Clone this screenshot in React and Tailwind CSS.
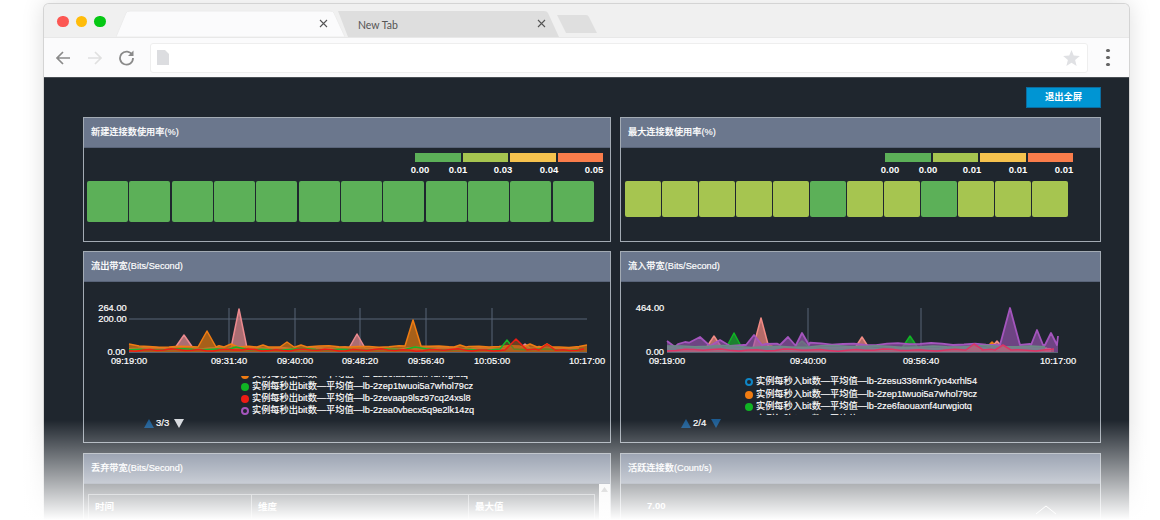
const FONT = "font-['Liberation_Sans','Noto_Sans_CJK_SC',sans-serif]";

function wiggle(x0, x1, step, base, amp, seed) {
  const pts = [];
  let i = 0;
  for (let x = x0; x <= x1 + 0.01; x += step) {
    const v = Math.sin(i * 1.7 + seed) * 0.6 + Math.sin(i * 0.63 + seed * 2.3) * 0.4;
    pts.push([x, base + v * amp]);
    i++;
  }
  return pts;
}

function withPeaks(pts, peaks) {
  const kept = pts.filter(([x]) => !peaks.some(([px, , w]) => Math.abs(x - px) < w));
  const extra = [];
  peaks.forEach(([px, py, w, fy]) => {
    extra.push([px, py]);
    if (fy) {
      extra.push([px - w, fy]);
      extra.push([px + w, fy]);
    }
  });
  return [...kept, ...extra].sort((a, b) => a[0] - b[0]);
}

function Area({ pts, bottom, stroke, fill, fo = 0.55, sw = 1.5 }) {
  const line = pts.map((p) => p[0].toFixed(1) + "," + p[1].toFixed(1)).join(" ");
  const first = pts[0][0];
  const last = pts[pts.length - 1][0];
  return (
    <g>
      <polygon points={`${first},${bottom} ${line} ${last},${bottom}`} fill={fill} fillOpacity={fo} />
      <polyline points={line} fill="none" stroke={stroke} strokeWidth={sw} strokeLinejoin="round" />
    </g>
  );
}

function AxisText({ x, y, children }) {
  return (
    <text x={x} y={y} textAnchor="middle" fill="#fff" stroke="#fff" strokeWidth="0.2" fontSize="9.3">
      {children}
    </text>
  );
}

function LeftChart() {
  const b = 352;
  const L = 129, R = 587;
  const pink = withPeaks(wiggle(L, R, 9, 348, 1, 1), [
    [184, 335, 9, 348],
    [239, 309, 8, 348],
    [357, 334, 8, 348],
    [525, 344, 5, 348],
  ]);
  const orange = withPeaks(wiggle(L, R, 10, 346.5, 0.9, 2.4), [
    [207, 331, 9, 347],
    [231, 344, 7, 347],
    [263, 345, 6, 347],
    [287, 342, 7, 347],
    [301, 345, 6, 347],
    [413, 320, 8, 346],
    [460, 345, 6, 347],
    [530, 344, 7, 347],
    [547, 344, 5, 347],
    [129, 344, 3],
    [587, 345, 3],
  ]);
  const green = withPeaks(wiggle(L, R, 11, 349.5, 1, 3.2), [
    [507, 340, 7, 349],
    [236, 347, 5],
    [415, 347, 5],
  ]);
  const red = withPeaks(wiggle(L, R, 7, 350, 1.3, 0.4), [
    [516, 339, 11, 350],
    [547, 344, 8, 350],
  ]);
  return (
    <svg className="block w-[526px] h-[94px]" viewBox="84 282 526 94">
      <line x1="129" x2="587" y1="319" y2="319" stroke="#596476" strokeWidth="1" />
      {[229, 295, 360, 426, 492].map((x) => (
        <line key={x} x1={x} x2={x} y1="308" y2="352" stroke="#596476" strokeWidth="1" />
      ))}
      <Area pts={pink} bottom={b} stroke="#ec8a8f" fill="#e88c90" fo={0.7} />
      <Area pts={orange} bottom={b} stroke="#f07c12" fill="#c96f14" fo={0.8} />
      <Area pts={green} bottom={b} stroke="#18b52a" fill="#b06a18" fo={0.4} />
      <Area pts={red} bottom={b} stroke="#ee1c14" fill="#a8571c" fo={0.55} />
      <line x1="129" x2="587" y1="352.5" y2="352.5" stroke="#596476" strokeWidth="1" />
      <AxisText x={112.5} y={311}>264.00</AxisText>
      <AxisText x={112.5} y={322}>200.00</AxisText>
      <AxisText x={116.5} y={355}>0.00</AxisText>
      {[["09:19:00", 129], ["09:31:40", 229], ["09:40:00", 295], ["09:48:20", 360], ["09:56:40", 426], ["10:05:00", 492], ["10:17:00", 587]].map(([t, x]) => (
        <AxisText key={t} x={x} y={364}>{t}</AxisText>
      ))}
    </svg>
  );
}

function RightChart() {
  const b = 352;
  const L = 667, R = 1058;
  const green = withPeaks(wiggle(L, R, 20, 348, 0.8, 2), [
    [734, 333, 8, 348],
    [910, 336, 8, 348],
    [802, 341, 8, 348],
  ]);
  const orange = withPeaks(wiggle(L, R, 20, 348, 0.8, 3), [
    [992, 342, 6, 348],
    [770, 345, 5, 348],
  ]);
  const pink = withPeaks(wiggle(L, R, 16, 348, 0.8, 5), [
    [714, 336, 8, 348],
    [761, 318, 8, 348],
    [862, 337, 7, 348],
    [997, 341, 6, 348],
  ]);
  const purple = withPeaks(wiggle(L, R, 11, 344, 1.4, 1.2), [
    [667, 341, 1],
    [675, 347, 3],
    [685, 342, 4],
    [700, 337, 6],
    [710, 346, 4],
    [720, 340, 4],
    [730, 346, 4],
    [754, 335, 8, 345],
    [788, 337, 8, 345],
    [802, 333, 7, 345],
    [1010, 308, 10, 345],
    [1037, 330, 6, 345],
    [1051, 333, 6, 345],
    [1058, 336, 1],
  ]);
  const grey = wiggle(L, R, 14, 346.5, 1.2, 4);
  const rose = withPeaks(wiggle(L, R, 9, 350, 1.2, 0.9), [
    [974, 344, 8, 350],
    [1003, 345, 8, 350],
  ]);
  return (
    <svg className="block w-[479px] h-[94px]" viewBox="621 282 479 94">
      {[808, 921].map((x) => (
        <line key={x} x1={x} x2={x} y1="308" y2="352" stroke="#596476" strokeWidth="1" />
      ))}
      <Area pts={orange} bottom={b} stroke="#f07c12" fill="#e07a20" fo={0.7} />
      <Area pts={green} bottom={b} stroke="#10b424" fill="#1a9a30" fo={0.8} />
      <Area pts={pink} bottom={b} stroke="#f08a84" fill="#e8827c" fo={0.75} />
      <Area pts={purple} bottom={b} stroke="#a455bd" fill="#9a55b0" fo={0.65} sw={1.8} />
      <Area pts={grey} bottom={b} stroke="#6d8a86" fill="#66858a" fo={0.75} />
      <Area pts={rose} bottom={b} stroke="#dc3567" fill="#c45a78" fo={0.65} />
      <line x1="667" x2="1058" y1="352.5" y2="352.5" stroke="#596476" strokeWidth="1" />
      <AxisText x={650} y={311}>464.00</AxisText>
      <AxisText x={655} y={355}>0.00</AxisText>
      {[["09:19:00", 667], ["09:40:00", 808], ["09:56:40", 921], ["10:17:00", 1058]].map(([t, x]) => (
        <AxisText key={t} x={x} y={364}>{t}</AxisText>
      ))}
    </svg>
  );
}

function Panel({ title, className = "", children }) {
  return (
    <section className={"border border-[#a3abb4] bg-[#1f262e] overflow-hidden " + className}>
      <h2 className="h-[30px] bg-[#6b778d] border-b border-[#596479] pl-[7px] pt-[1px] flex items-center text-[9.2px] font-medium [-webkit-text-stroke:0.15px_white] text-white">
        {title}
      </h2>
      {children}
    </section>
  );
}

function Heat({ bars, labels, cells, gap, cellClass, left, labelXs, barRight }) {
  return (
    <div>
      <div className="flex justify-end gap-[2px] pt-[5px]" style={{ paddingRight: barRight }}>
        {bars.map((c, i) => (
          <div key={i} className="h-[9px] w-[45.5px]" style={{ background: c }} />
        ))}
      </div>
      <div className="relative h-[19px]">
        {labels.map((t, i) => (
          <span key={i} className="absolute top-[1px] text-[9.5px] font-bold text-white -translate-x-1/2" style={{ left: labelXs[i] }}>
            {t}
          </span>
        ))}
      </div>
      <div className="flex" style={{ gap, paddingLeft: left }}>
        {cells.map((c, i) => (
          <div key={i} className={"rounded-[2px] " + cellClass} style={{ background: c }} />
        ))}
      </div>
    </div>
  );
}

function Dot({ color, hollow }) {
  return (
    <span
      className="inline-block w-[8px] h-[8px] rounded-full shrink-0"
      style={hollow ? { border: `2px solid ${color}` } : { background: color }}
    />
  );
}

function Legend({ rows, left, step, top }) {
  return (
    <div className="h-[39px] overflow-hidden text-[9.2px] [-webkit-text-stroke:0.15px_white] text-white" style={{ paddingLeft: left }}>
      <div style={{ marginTop: top }}>
        {rows.map(([c, h, t]) => (
          <div key={t} className="flex items-center gap-[3px]" style={{ height: step }}>
            <Dot color={c} hollow={h} />
            <span className="whitespace-nowrap">{t}</span>
          </div>
        ))}
      </div>
    </div>
  );
}

function Tri({ down, color }) {
  return (
    <svg width="10" height="9" viewBox="0 0 10 9" className="block">
      <polygon points={down ? "0,0 10,0 5,9" : "0,9 10,9 5,0"} fill={color} />
    </svg>
  );
}

function Pager({ left, text, downColor }) {
  return (
    <div className="flex items-center h-[14px] mt-[1px] text-[9.5px] [-webkit-text-stroke:0.2px_white] text-white" style={{ paddingLeft: left }}>
      <Tri color="#1d5c92" />
      <span className="ml-[2px] mr-[5px]">{text}</span>
      <Tri down color={downColor} />
    </div>
  );
}

function TabX({ className }) {
  return (
    <svg width="9" height="9" viewBox="0 0 9 9" className={className}>
      <path d="M1 1 L8 8 M8 1 L1 8" stroke="#555" strokeWidth="1.1" />
    </svg>
  );
}

const G = "#5cb058";
const Y = "#a6c550";
const BARS = ["#5cb058", "#a6c550", "#f6c24e", "#fa7d4b"];

export default function App() {
  return (
    <div className={"relative w-[1160px] h-[520px] overflow-hidden bg-white pl-[43px] pt-[3px] " + FONT}>
      <div className="w-[1087px] h-[560px] rounded-t-[6px] border-x border-t border-[#d4d4d4] shadow-[0_0_22px_rgba(0,0,0,0.13)] bg-[#f0f0f0] overflow-hidden">
        {/* tab strip */}
        <div className="relative h-[34px] flex items-end bg-[#f0f0f0] border-b border-[#e8e8e8]">
          <div className="flex gap-[7px] pl-[13px] pb-[10px]">
            <span className="w-[11.5px] h-[11.5px] rounded-full bg-[#fc5753]" />
            <span className="w-[11.5px] h-[11.5px] rounded-full bg-[#ffbc0a]" />
            <span className="w-[11.5px] h-[11.5px] rounded-full bg-[#06c814]" />
          </div>
          <div className="relative w-[229px] h-[27px] ml-[10.5px] z-10">
            <svg className="absolute inset-0" width="229" height="27" viewBox="0 0 229 27">
              <path d="M0 27 L10 3 Q11 1 14 1 L214 1 Q217 1 218 3 L229 27 Z" fill="#fbfbfc" stroke="#ececec" />
            </svg>
            <TabX className="absolute right-[17px] top-[9px]" />
          </div>
          <div className="relative w-[222px] h-[27px] -ml-[7px]">
            <svg className="absolute inset-0" width="222" height="27" viewBox="0 0 222 27">
              <path d="M0 1 L206 1 Q209 1 210 3 L221 27 L10 27 Z" fill="#dedede" />
            </svg>
            <span className="absolute left-[20px] top-[8px] text-[10.5px] text-[#555] font-['Lato',sans-serif]">New Tab</span>
            <TabX className="absolute right-[14px] top-[9px]" />
          </div>
          <svg className="block mb-[3px] -ml-[3px]" width="42" height="20" viewBox="0 0 42 20">
            <path d="M0 1 L29 1 Q31 1 32 3 L40 19 L9 19 Z" fill="#dfdfdf" />
          </svg>
        </div>
        {/* toolbar */}
        <div className="h-[40px] bg-[#fbfbfc] flex items-center border-b border-[#4a4f55]">
          <svg className="ml-[11px] shrink-0" width="16" height="16" viewBox="0 0 16 16">
            <path d="M15 8 H2 M8 2 L2 8 L8 14" fill="none" stroke="#8a8a8a" strokeWidth="1.7" />
          </svg>
          <svg className="ml-[16px] shrink-0" width="16" height="16" viewBox="0 0 16 16">
            <path d="M1 8 H14 M8 2 L14 8 L8 14" fill="none" stroke="#e0e0e0" strokeWidth="1.7" />
          </svg>
          <svg className="ml-[15px] shrink-0" width="17" height="17" viewBox="0 0 17 17">
            <path d="M14.2 6 A6.5 6.5 0 1 0 15 9" fill="none" stroke="#8a8a8a" strokeWidth="1.8" />
            <path d="M15.5 1.5 V7 H10 Z" fill="#8a8a8a" />
          </svg>
          <div className="ml-[15px] w-[938px] h-[30px] bg-white border border-[#eeeeee] rounded-[3px] flex items-center justify-between pl-[6px] pr-[7px]">
            <svg width="12" height="15" viewBox="0 0 12 15">
              <path d="M0 0 H8 L12 4 V15 H0 Z" fill="#dcdde0" />
            </svg>
            <svg width="17" height="16" viewBox="0 0 24 23">
              <path d="M12 0 L15.2 8 L24 8.7 L17.2 14.3 L19.4 23 L12 18.3 L4.6 23 L6.8 14.3 L0 8.7 L8.8 8 Z" fill="#e0e1e4" />
            </svg>
          </div>
          <div className="ml-[18px] flex flex-col gap-[3.5px]">
            <span className="w-[3.5px] h-[3.5px] rounded-full bg-[#666]" />
            <span className="w-[3.5px] h-[3.5px] rounded-full bg-[#666]" />
            <span className="w-[3.5px] h-[3.5px] rounded-full bg-[#666]" />
          </div>
        </div>
        {/* page */}
        <main className="bg-[#1f262e] h-[480px] pl-[39px]">
          <div className="flex justify-end pr-[28px] pt-[9px] h-[39px]">
            <button className="w-[75px] h-[21px] bg-[#0095d3] border border-[#0b6da0] text-[9.3px] font-bold text-white">退出全屏</button>
          </div>
          <div className="grid grid-cols-[528px_481px] grid-rows-[125px_192px_auto] gap-x-[9px] gap-y-[9px]">
            <Panel title="新建连接数使用率(%)">
              <Heat
                bars={BARS}
                barRight={7}
                labels={["0.00", "0.01", "0.03", "0.04", "0.05"]}
                labelXs={[336, 374, 419, 465, 510]}
                cells={Array(12).fill(G)}
                gap="1.35px"
                left={3}
                cellClass="w-[41px] h-[41px]"
              />
            </Panel>
            <Panel title="最大连接数使用率(%)">
              <Heat
                bars={BARS}
                barRight={27}
                labels={["0.00", "0.00", "0.01", "0.01", "0.01"]}
                labelXs={[269, 307, 351, 397, 443]}
                cells={[Y, Y, Y, Y, Y, G, Y, Y, G, Y, Y, Y]}
                gap="1px"
                left={4}
                cellClass="w-[36px] h-[36px]"
              />
            </Panel>
            <Panel title="流出带宽(Bits/Second)">
              <LeftChart />
              <Legend
                left={157}
                step={12}
                top={-7}
                rows={[
                  ["#f07c12", false, "实例每秒出bit数—平均值—lb-2ze6faouaxnf4urwgiotq"],
                  ["#10b424", false, "实例每秒出bit数—平均值—lb-2zep1twuoi5a7whol79cz"],
                  ["#ee1c14", false, "实例每秒出bit数—平均值—lb-2zevaap9lsz97cq24xsl8"],
                  ["#a455bd", true, "实例每秒出bit数—平均值—lb-2zea0vbecx5q9e2lk14zq"],
                ]}
              />
              <Pager left={60} text="3/3" downColor="#d8dbe0" />
            </Panel>
            <Panel title="流入带宽(Bits/Second)">
              <RightChart />
              <Legend
                left={124}
                step={12.5}
                top={0}
                rows={[
                  ["#0f86c6", true, "实例每秒入bit数—平均值—lb-2zesu336mrk7yo4xrhl54"],
                  ["#f07c12", false, "实例每秒入bit数—平均值—lb-2zep1twuoi5a7whol79cz"],
                  ["#10b424", false, "实例每秒入bit数—平均值—lb-2ze6faouaxnf4urwgiotq"],
                  ["#ee1c14", false, "实例每秒入bit数—平均值—lb-2zevaap9lsz97cq24xsl8"],
                ]}
              />
              <Pager left={60} text="2/4" downColor="#1d5c92" />
            </Panel>
            <Panel title="丢弃带宽(Bits/Second)" className="mt-[1px] h-[70px]">
              <div className="flex">
                <table className="ml-[4px] mt-[10px] w-[507px] h-[26px] border-collapse text-[9.5px] font-bold text-white text-left">
                  <thead>
                    <tr>
                      <th className="border border-[#8b9096] pl-[6px] w-[163px] font-bold">时间</th>
                      <th className="border border-[#8b9096] pl-[6px] w-[217px] font-bold">维度</th>
                      <th className="border border-[#8b9096] pl-[6px] font-bold">最大值</th>
                    </tr>
                  </thead>
                </table>
                <div className="ml-auto w-[11px] h-[40px] bg-[#f1f1f1] flex justify-center pt-[3px]">
                  <svg width="7" height="5" viewBox="0 0 7 5"><polygon points="0,5 7,5 3.5,0" fill="#999" /></svg>
                </div>
              </div>
            </Panel>
            <Panel title="活跃连接数(Count/s)" className="mt-[1px] h-[70px]">
              <div className="relative pl-[26px] pt-[15px] text-[9.5px] font-bold text-white">
                7.00
                <svg className="absolute left-[415px] top-[21px]" width="20" height="10" viewBox="0 0 20 10">
                  <path d="M0 9 L10 1 L20 9" fill="none" stroke="#fff" strokeWidth="1" />
                </svg>
              </div>
            </Panel>
          </div>
        </main>
      </div>
      {/* white fade over the bottom of the window */}
      <div className="absolute inset-x-0 bottom-0 h-[100px] bg-gradient-to-b from-white/0 to-white pointer-events-none" />
    </div>
  );
}
